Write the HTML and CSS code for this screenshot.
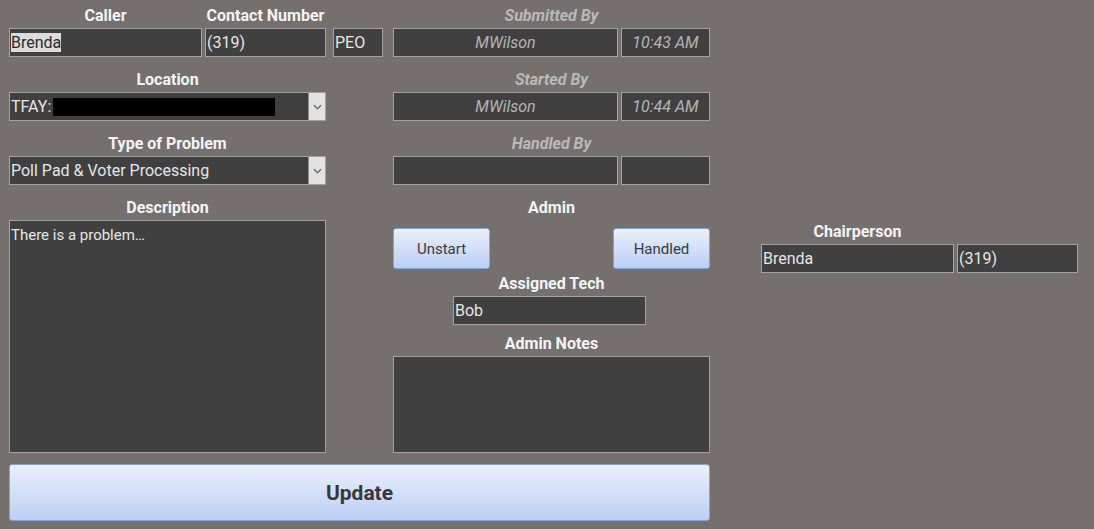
FILE: index.html
```html
<!DOCTYPE html>
<html>
<head>
<meta charset="utf-8">
<link rel="stylesheet" href="styles.css">
</head>
<body>
<div class="page">
  <div class="main">
    <div class="cols">
      <div class="col">
        <div class="row">
          <div class="field w-name">
            <div class="label">Caller</div>
            <div class="box"><span class="sel">Brenda</span></div>
          </div>
          <div class="field w-phone">
            <div class="label">Contact Number</div>
            <div class="box">(319)</div>
          </div>
          <div class="field w-peo">
            <div class="label"></div>
            <div class="box">PEO</div>
          </div>
        </div>

        <div class="field">
          <div class="label">Location</div>
          <div class="box select">
            <span class="select-text">TFAY:<span class="redact"></span></span>
            <span class="drop"><svg width="9" height="6" viewBox="0 0 9 6"><path d="M1 1.2 L4.5 4.6 L8 1.2" fill="none" stroke="#5a5a5a" stroke-width="1.2"/></svg></span>
          </div>
        </div>

        <div class="field">
          <div class="label">Type of Problem</div>
          <div class="box select">
            <span class="select-text">Poll Pad &amp; Voter Processing</span>
            <span class="drop"><svg width="9" height="6" viewBox="0 0 9 6"><path d="M1 1.2 L4.5 4.6 L8 1.2" fill="none" stroke="#5a5a5a" stroke-width="1.2"/></svg></span>
          </div>
        </div>

        <div class="field last">
          <div class="label">Description</div>
          <div class="box area desc">There is a problem…</div>
        </div>
      </div>

      <div class="col">
        <div class="field">
          <div class="label muted">Submitted By</div>
          <div class="row tight">
            <div class="box ital w-who">MWilson</div>
            <div class="box ital w-time">10:43 AM</div>
          </div>
        </div>
        <div class="field">
          <div class="label muted">Started By</div>
          <div class="row tight">
            <div class="box ital w-who">MWilson</div>
            <div class="box ital w-time">10:44 AM</div>
          </div>
        </div>
        <div class="field">
          <div class="label muted">Handled By</div>
          <div class="row tight">
            <div class="box ital w-who"></div>
            <div class="box ital w-time"></div>
          </div>
        </div>
        <div class="admin">
          <div class="label">Admin</div>
          <div class="btns">
            <button class="btn small">Unstart</button>
            <button class="btn small">Handled</button>
          </div>
        </div>
        <div class="tech">
          <div class="label">Assigned Tech</div>
          <div class="box w-name">Bob</div>
        </div>
        <div class="notes">
          <div class="label">Admin Notes</div>
          <div class="box area note"></div>
        </div>
      </div>
    </div>
    <button class="btn update">Update</button>
  </div>

  <div class="col chair">
    <div class="row tight">
      <div class="field w-name">
        <div class="label">Chairperson</div>
        <div class="box">Brenda</div>
      </div>
      <div class="field w-phone">
        <div class="label"></div>
        <div class="box">(319)</div>
      </div>
    </div>
  </div>
</div>
</body>
</html>
```

FILE: styles.css
```css
* { box-sizing: border-box; }
html, body {
  margin: 0;
  padding: 0;
  background: #75706e;
  font-family: Roboto, "Noto Sans", "Liberation Sans", sans-serif;
  color: #e8e8e8;
}
.page {
  display: flex;
  align-items: flex-start;
  padding: 6px 0 0 9px;
}
.main {
  display: flex;
  flex-direction: column;
  width: 701px;
}
.cols {
  display: flex;
  gap: 67px;
}
.col {
  width: 317px;
  flex-shrink: 0;
  display: flex;
  flex-direction: column;
}
.chair {
  margin-left: 51px;
  margin-top: 216px;
}
.row {
  display: flex;
  align-items: flex-end;
}
.row.tight { gap: 3px; }
.row .w-name { margin-right: 3px; }
.row .w-phone + .w-peo { margin-left: 7px; }
.row.tight .w-name { margin-right: 0; }
.field {
  display: flex;
  flex-direction: column;
  margin-bottom: 13px;
}
.row .field { margin-bottom: 13px; }
.chair .row .field { margin-bottom: 0; }
.field.last { margin-bottom: 0; }
.label {
  height: 18px;
  line-height: 20px;
  margin-bottom: 4px;
  text-align: center;
  font-weight: 700;
  font-size: 16px;
  color: #f4f4f4;
  white-space: nowrap;
}
.label.muted {
  color: #b9b9b9;
  font-style: italic;
}
.box {
  height: 29px;
  border: 1px solid #a2a2a2;
  background: #404040;
  color: #e6e6e6;
  font-size: 16px;
  padding: 0 1px;
  display: flex;
  align-items: center;
  white-space: nowrap;
  flex-shrink: 0;
}
.w-name { width: 193px; flex-shrink: 0; }
.w-phone { width: 121px; flex-shrink: 0; }
.w-peo { width: 50px; flex-shrink: 0; }
.w-who { width: 225px; }
.w-time { width: 89px; }
.sel {
  background: #dcdcdc;
  color: #2a2a2a;
}
.ital {
  font-style: italic;
  color: #b4b4b4;
  justify-content: center;
}
.select {
  padding-right: 0;
  justify-content: space-between;
  align-items: stretch;
}
.select-text {
  display: flex;
  align-items: center;
}
.redact {
  display: inline-block;
  width: 222px;
  height: 18px;
  background: #000;
  margin-left: 2px;
}
.drop {
  width: 17px;
  background: #e2e2e2;
  border-left: 1px solid #8a8a8a;
  display: flex;
  align-items: center;
  justify-content: center;
}
.area {
  align-items: flex-start;
  padding-top: 5px;
  font-size: 15px;
}
.desc { height: 233px; }
.admin {
  display: flex;
  flex-direction: column;
}
.admin .btns {
  display: flex;
  justify-content: space-between;
  margin-top: 8px;
}
.btn {
  border: 1px solid #86a3dc;
  border-radius: 3px;
  background: linear-gradient(#eaf0fd, #bccff5);
  color: #333;
  font-family: Roboto, "Noto Sans", "Liberation Sans", sans-serif;
  padding: 0;
  cursor: pointer;
}
.btn.small {
  width: 97px;
  height: 41px;
  font-size: 15px;
  color: #3a3a3a;
}
.tech {
  margin-top: 5px;
  display: flex;
  flex-direction: column;
  align-items: center;
}
.tech .label { align-self: stretch; }
.tech .box { margin-left: -4px; }
.notes {
  margin-top: 9px;
  display: flex;
  flex-direction: column;
}
.note { height: 97px; }
.update {
  margin-top: 11px;
  width: 701px;
  height: 57px;
  font-size: 21px;
  font-weight: 700;
  color: #383838;
}
```
